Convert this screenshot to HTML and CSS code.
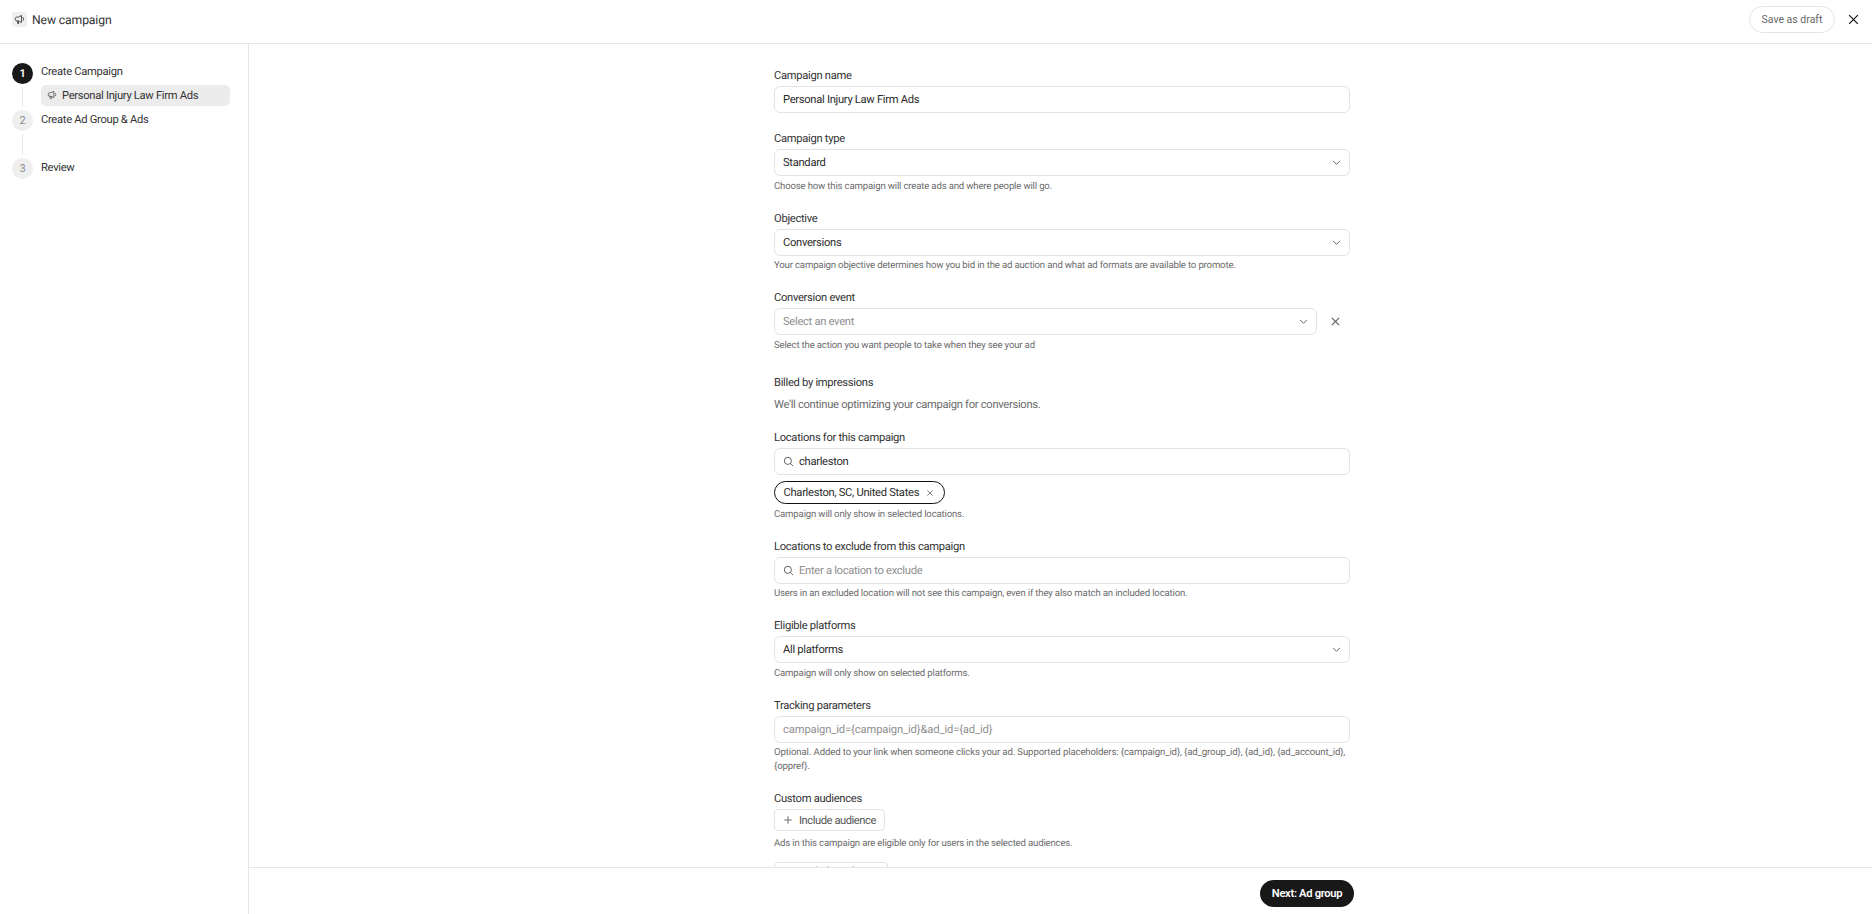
FILE: index.html
```html
<!DOCTYPE html>
<html lang="en">
<head>
<meta charset="utf-8">
<title>New campaign</title>
<link rel="stylesheet" href="styles.css">
</head>
<body>
<svg class="defs" width="0" height="0" aria-hidden="true">
  <symbol id="mega" viewBox="0 0 12 12"><path d="M8.2 1.6 4.6 3.4H2.8A1.3 1.3 0 0 0 1.5 4.7v1.4a1.3 1.3 0 0 0 1.3 1.3h1.8l3.6 1.8zM3.4 7.4l.7 3h1.2l-.6-2.7M9.6 3.6a2.6 2.6 0 0 1 0 3.8" fill="none" stroke="currentColor" stroke-width="1"/></symbol>
  <symbol id="chev" viewBox="0 0 12 12"><path d="M2.2 4.2 6 8l3.8-3.8" fill="none" stroke="currentColor" stroke-width="1"/></symbol>
  <symbol id="cross" viewBox="0 0 12 12"><path d="M2 2l8 8M10 2l-8 8" fill="none" stroke="currentColor" stroke-width="1.1"/></symbol>
  <symbol id="search" viewBox="0 0 12 12"><circle cx="5.3" cy="5.3" r="3.9" fill="none" stroke="currentColor" stroke-width="1"/><path d="M8.2 8.2 11 11" fill="none" stroke="currentColor" stroke-width="1"/></symbol>
  <symbol id="plus" viewBox="0 0 12 12"><path d="M6 1.5v9M1.5 6h9" fill="none" stroke="currentColor" stroke-width="1"/></symbol>
</svg>
<header class="topbar">
  <div class="title">
    <span class="title-icon"><svg class="ic12"><use href="#mega"/></svg></span>
    <span>New campaign</span>
  </div>
  <div class="top-actions">
    <button class="draft">Save as draft</button>
    <svg class="close"><use href="#cross"/></svg>
  </div>
</header>
<div class="body">
  <aside class="side">
    <div class="step step-first">
      <div class="rail"><span class="dot dot-on">1</span><span class="line"></span></div>
      <div class="step-main">
        <div class="step-label">Create Campaign</div>
        <div class="sub"><svg class="ic11"><use href="#mega"/></svg><span>Personal Injury Law Firm Ads</span></div>
      </div>
    </div>
    <div class="step">
      <div class="rail"><span class="dot">2</span><span class="line"></span></div>
      <div class="step-main step-main-low"><div class="step-label">Create Ad Group &amp; Ads</div></div>
    </div>
    <div class="step">
      <div class="rail"><span class="dot">3</span></div>
      <div class="step-main step-main-low"><div class="step-label">Review</div></div>
    </div>
  </aside>
  <div class="content">
    <main class="scroll">
      <form class="form">
        <div class="field">
          <div class="label">Campaign name</div>
          <div class="box"><span class="val">Personal Injury Law Firm Ads</span></div>
        </div>
        <div class="field">
          <div class="label">Campaign type</div>
          <div class="box"><span class="val">Standard</span><svg class="chev"><use href="#chev"/></svg></div>
          <div class="help">Choose how this campaign will create ads and where people will go.</div>
        </div>
        <div class="field">
          <div class="label">Objective</div>
          <div class="box"><span class="val">Conversions</span><svg class="chev"><use href="#chev"/></svg></div>
          <div class="help">Your campaign objective determines how you bid in the ad auction and what ad formats are available to promote.</div>
        </div>
        <div class="field field-billed-gap">
          <div class="label">Conversion event</div>
          <div class="row">
            <div class="box box-grow"><span class="ph">Select an event</span><svg class="chev"><use href="#chev"/></svg></div>
            <svg class="row-x"><use href="#cross"/></svg>
          </div>
          <div class="help">Select the action you want people to take when they see your ad</div>
        </div>
        <div class="field">
          <div class="label">Billed by impressions</div>
          <div class="note">We'll continue optimizing your campaign for conversions.</div>
        </div>
        <div class="field">
          <div class="label">Locations for this campaign</div>
          <div class="box"><svg class="search"><use href="#search"/></svg><span class="val">charleston</span></div>
          <div class="chip"><span>Charleston, SC, United States</span><svg class="chip-x"><use href="#cross"/></svg></div>
          <div class="help">Campaign will only show in selected locations.</div>
        </div>
        <div class="field">
          <div class="label">Locations to exclude from this campaign</div>
          <div class="box"><svg class="search"><use href="#search"/></svg><span class="ph">Enter a location to exclude</span></div>
          <div class="help">Users in an excluded location will not see this campaign, even if they also match an included location.</div>
        </div>
        <div class="field">
          <div class="label">Eligible platforms</div>
          <div class="box"><span class="val">All platforms</span><svg class="chev"><use href="#chev"/></svg></div>
          <div class="help">Campaign will only show on selected platforms.</div>
        </div>
        <div class="field">
          <div class="label">Tracking parameters</div>
          <div class="box"><span class="ph ph-code">campaign_id={campaign_id}&amp;ad_id={ad_id}</span></div>
          <div class="help help-code">Optional. Added to your link when someone clicks your ad. Supported placeholders: {campaign_id}, {ad_group_id}, {ad_id}, {ad_account_id}, {oppref}.</div>
        </div>
        <div class="field">
          <div class="label">Custom audiences</div>
          <div class="add"><svg class="plus"><use href="#plus"/></svg><span>Include audience</span></div>
          <div class="help help-wide">Ads in this campaign are eligible only for users in the selected audiences.</div>
          <div class="add add-next"><svg class="plus"><use href="#plus"/></svg><span>Exclude audience</span></div>
        </div>
      </form>
    </main>
    <footer class="foot">
      <div class="foot-inner"><button class="next">Next: Ad group</button></div>
    </footer>
  </div>
</div>
</body>
</html>
```
FILE: styles.css
```css
* { box-sizing: border-box; }
html, body { margin: 0; height: 100%; }
body {
  display: flex;
  flex-direction: column;
  height: 914px;
  overflow: hidden;
  background: #fff;
  color: #2b2b2b;
  font-family: "Roboto", "Liberation Sans", sans-serif;
  font-size: 11.2px;
  letter-spacing: -0.3px;
  text-rendering: geometricPrecision;
}
.defs { position: absolute; }
svg { display: block; flex: none; }
button { font: inherit; cursor: pointer; }

.topbar {
  flex: none;
  height: 44px;
  border-bottom: 1px solid #e6e6e6;
  display: flex;
  align-items: center;
  justify-content: space-between;
  padding: 0 12px 4px;
}
.title { display: flex; align-items: center; gap: 5px; font-size: 12.2px; letter-spacing: -0.13px; color: #333; }
.title-icon {
  width: 15px; height: 15px; border-radius: 3px; background: #efefef;
  display: flex; align-items: center; justify-content: center; color: #444;
}
.ic12 { width: 11px; height: 11px; }
.ic11 { width: 10px; height: 10px; color: #555; }
.top-actions { display: flex; align-items: center; gap: 12px; }
.draft {
  width: 86px; height: 27px; padding: 0;
  border: 1px solid #e4e4e4; border-radius: 14px; background: #fff;
  color: #666; font-size: 10.5px; letter-spacing: 0;
}
.close { width: 13px; height: 13px; color: #111; }

.body { flex: 1; display: flex; min-height: 0; }
.side {
  flex: none; width: 249px;
  border-right: 1px solid #e6e6e6;
  padding: 19px 18px 0 12px;
}
.step { display: flex; gap: 8px; min-height: 48px; }
.step-first { min-height: 47px; }
.rail { flex: none; width: 21px; display: flex; flex-direction: column; align-items: center; }
.dot {
  flex: none; width: 21px; height: 21px; border-radius: 50%;
  background: #efefef; color: #8a8a8a; font-size: 11px;
  display: flex; align-items: center; justify-content: center;
}
.dot-on { background: #181818; color: #fff; font-weight: 600; }
.line { flex: 1; width: 1px; background: #e6e6e6; margin: 3px 0; }
.step-main { flex: 1; min-width: 0; }
.step-main-low { padding-top: 1px; }
.step-label { line-height: 16px; padding-top: 1px; color: #333; }
.sub {
  margin-top: 5px; height: 21px; border-radius: 5px; background: #ececec;
  display: flex; align-items: center; gap: 5px; padding: 0 0 1px 6px;
  color: #333;
}

.content { flex: 1; min-width: 0; display: flex; flex-direction: column; }
.scroll { flex: 1; min-height: 0; overflow: hidden; display: flex; justify-content: center; padding-left: 3px; }
.form { width: 584px; padding: 23px 4px 0; }
.field { margin-bottom: 17px; }
.field-billed-gap { margin-bottom: 22.5px; }
.label { line-height: 16px; padding-top: 1px; margin-bottom: 2px; color: #333; }
.box {
  height: 27px; border: 1px solid #e3e3e3; border-radius: 6px; background: #fff;
  display: flex; align-items: center; padding: 0 8px;
}
.box-grow { flex: 1; }
.val { color: #2b2b2b; white-space: nowrap; }
.ph { color: #8f8f8f; white-space: nowrap; }
.ph-code { letter-spacing: -0.12px; }
.chev { width: 11px; height: 11px; margin-left: auto; color: #555; margin-right: -1px; }
.row { display: flex; align-items: center; }
.row-x { width: 11px; height: 11px; margin: 0 9.5px 0 13px; color: #555; }
.search { width: 11px; height: 11px; color: #555; margin-right: 5px; }
.help { margin: 3.5px 0 -1px; line-height: 14px; font-size: 9.6px; letter-spacing: -0.17px; color: #6b6b6b; }
.help-code { letter-spacing: -0.12px; }
.note { margin: 6px 0 -1px; line-height: 16px; color: #6b6b6b; }
.chip {
  margin-top: 6px; width: 171px; height: 23px; border: 1px solid #111; border-radius: 12px;
  display: flex; align-items: center; gap: 7px; padding-left: 8.5px; color: #2b2b2b; white-space: nowrap;
}
.chip-x { width: 8px; height: 8px; color: #555; }
.add {
  width: 111px; height: 22px; border: 1px solid #e3e3e3; border-radius: 4px;
  display: flex; align-items: center; gap: 6px; padding-left: 8px;
  color: #555; white-space: nowrap; letter-spacing: -0.45px;
}
.add-next { width: 114px; height: 30px; margin-top: 12px; padding-bottom: 12px; }
.plus { width: 10px; height: 10px; color: #555; }
.help-wide { margin-top: 6px; }

.foot { flex: none; height: 47px; border-top: 1px solid #e6e6e6; display: flex; justify-content: center; padding-left: 3px; background: #fff; }
.foot-inner { width: 584px; display: flex; justify-content: flex-end; padding-top: 12px; }
.next {
  width: 94px; height: 27px; padding: 0; border: 0; border-radius: 14px;
  background: #181818; color: #fff; font-size: 11.2px; font-weight: 600; letter-spacing: -0.32px;
}
```
